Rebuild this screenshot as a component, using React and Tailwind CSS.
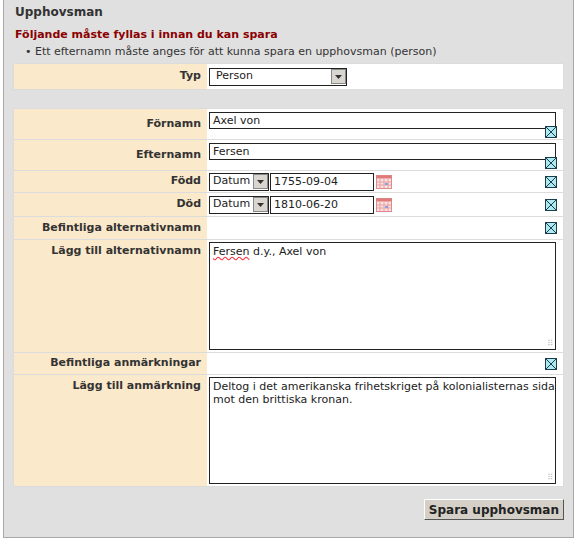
import React from "react";

const font = { fontFamily: "'DejaVu Sans', Verdana, sans-serif" };

const XIcon = () => (
  <svg width="12" height="12" viewBox="0 0 12 12" className="block">
    <rect x="0.5" y="0.5" width="11" height="11" fill="#aee8f0" stroke="#1d3d4d" />
    <path d="M0.5 0.5 L11.5 11.5 M11.5 0.5 L0.5 11.5" stroke="#1d3d4d" strokeWidth="1" />
  </svg>
);

const CalIcon = () => (
  <svg width="16" height="14" viewBox="0 0 16 14" className="block">
    <rect x="0.5" y="0.5" width="15" height="13" fill="#fbe3e3" stroke="#e08a8a" />
    <rect x="0.5" y="0.5" width="15" height="3" fill="#e07a7a" />
    <path d="M4 4v9 M8 4v9 M12 4v9 M1 7h14 M1 10h14" stroke="#e8a0a0" strokeWidth="1" />
    <rect x="9" y="8" width="3" height="2" fill="#8aa0e0" />
  </svg>
);

const Arrow = () => (
  <span className="w-[15px] h-[15px] bg-[#d8d6cf] border border-[#888] flex items-center justify-center">
    <svg width="7" height="4" viewBox="0 0 7 4"><path d="M0 0h7L3.5 4z" fill="#333" /></svg>
  </span>
);

const Label = ({ children, tall }) => (
  <div className={`w-[193px] shrink-0 bg-[#fbe9cb] text-right pr-[6px] font-bold text-[#333] ${tall ? "pt-[3px]" : "flex items-center justify-end"}`}>
    {children}
  </div>
);

const Row = ({ label, children, h, tall }) => (
  <div className="flex border-b border-[#dcdcdc]" style={{ height: h }}>
    <Label tall={tall}>{label}</Label>
    <div className="flex-1 bg-white pl-[2px] pr-[6px] relative">{children}</div>
  </div>
);

const TextRow = ({ label, value }) => (
  <Row label={label} h={31}>
    <div className="pt-[3px]">
      <div className="h-[17px] border border-[#222] pl-[3px] leading-[15px] mr-[1px]">{value}</div>
      <div className="flex justify-end mt-[-3px]"><XIcon /></div>
    </div>
  </Row>
);

const DateRow = ({ label, value, h }) => (
  <Row label={label} h={h}>
    <div className="flex items-center h-full">
      <div className="h-[18px] w-[60px] border border-[#222] flex items-center justify-between pl-[3px]">
        Datum<Arrow />
      </div>
      <div className="h-[18px] w-[104px] ml-[1px] border border-[#222] pl-[3px] leading-[16px]">{value}</div>
      <span className="ml-[2px]"><CalIcon /></span>
      <span className="ml-auto"><XIcon /></span>
    </div>
  </Row>
);

const Area = ({ value, h }) => (
  <div className="pt-[2px]">
    <div className="border border-[#222] pl-[3px] pt-[2px] leading-[13px] relative mr-[1px]" style={{ height: h }}>
      {value}
      <span className="absolute right-[2px] bottom-[1px] text-[8px] text-[#bbb] leading-none">⠿</span>
    </div>
  </div>
);

export default function App() {
  return (
    <div className="w-[582px] h-[553px] bg-white text-[11px] text-[#222]" style={font}>
      <div className="ml-[3px] w-[571px] h-[538px] bg-[#e0e0e0] border border-[#a8a8a8] border-t-0 pt-[4px] px-[9px]">
        <div className="font-bold text-[12px] text-[#333] pl-[2px] leading-[16px]">Upphovsman</div>
        <div className="font-bold text-[#8b0000] mt-[8px] pl-[2px] leading-[14px]">Följande måste fyllas i innan du kan spara</div>
        <div className="mt-[3px] pl-[12px] text-[#333] leading-[14px]">• Ett efternamn måste anges för att kunna spara en upphovsman (person)</div>

        <div className="mt-[4px] flex h-[27px] border border-[#dcdcdc]">
          <Label>Typ</Label>
          <div className="flex-1 bg-white flex items-center pl-[2px]">
            <div className="w-[138px] h-[18px] border border-[#222] flex items-center justify-between pl-[6px]">
              Person<Arrow />
            </div>
          </div>
        </div>

        <div className="mt-[18px] border border-[#dcdcdc] border-b-0">
          <TextRow label="Förnamn" value="Axel von" />
          <TextRow label="Efternamn" value="Fersen" />
          <DateRow label="Född" value="1755-09-04" h={22} />
          <DateRow label="Död" value="1810-06-20" h={24} />
          <Row label="Befintliga alternativnamn" h={23}>
            <div className="flex items-center justify-end h-full"><XIcon /></div>
          </Row>
          <Row label="Lägg till alternativnamn" h={113} tall>
            <Area h={108} value={<><span className="underline decoration-wavy decoration-red-500">Fersen</span> d.y., Axel von</>} />
          </Row>
          <Row label="Befintliga anmärkningar" h={22}>
            <div className="flex items-center justify-end h-full"><XIcon /></div>
          </Row>
          <Row label="Lägg till anmärkning" h={112} tall>
            <Area h={107} value="Deltog i det amerikanska frihetskriget på kolonialisternas sida mot den brittiska kronan." />
          </Row>
        </div>

        <div className="flex justify-end mt-[12px]">
          <button className="h-[21px] px-[4px] bg-[#d4d0c8] border border-t-white border-l-white border-r-[#555] border-b-[#555] font-bold text-[12px] text-[#222]" style={font}>
            Spara upphovsman
          </button>
        </div>
      </div>
    </div>
  );
}
